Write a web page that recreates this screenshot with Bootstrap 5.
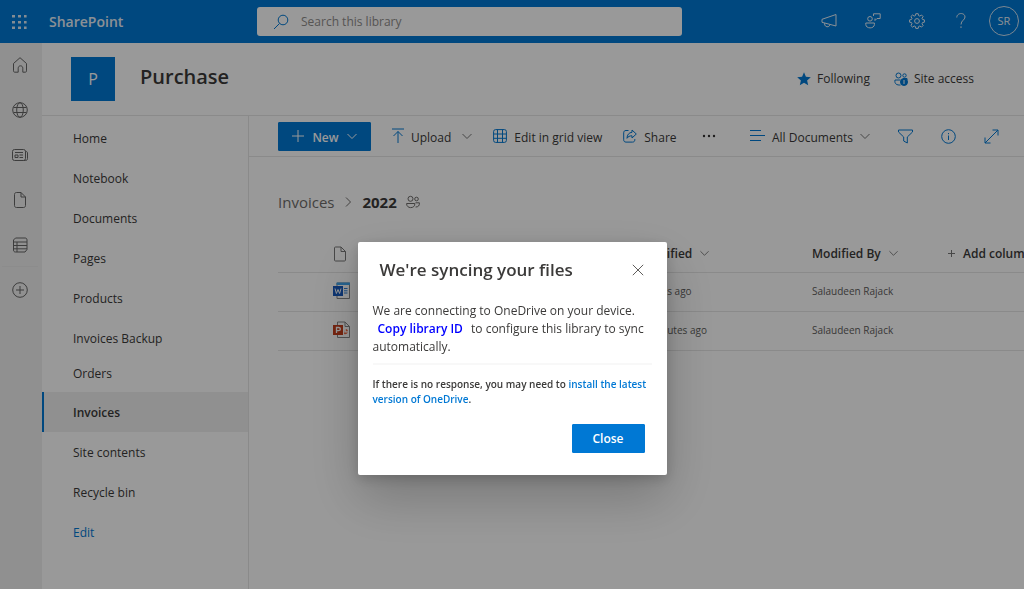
<!DOCTYPE html>
<html lang="en">
<head>
<meta charset="utf-8">
<meta name="viewport" content="width=device-width, initial-scale=1">
<title>Purchase - Invoices - 2022</title>
<link href="https://cdn.jsdelivr.net/npm/bootstrap@5.3.0/dist/css/bootstrap.min.css" rel="stylesheet">
<style>
:root{--brand:#0078d4;--ink:#3b3a39;--line:#e6e6e6}
body{font-family:"Open Sans","Noto Sans",sans-serif;font-size:12px;line-height:18px;color:var(--ink)}
svg{display:block;flex:none;fill:none;stroke:currentColor;stroke-width:1}
a{text-decoration:none;color:inherit}
.suite{background:var(--brand);height:43px;color:#fff}
.suite .brand-zone{width:257px;flex:none;padding-left:11px;gap:22px}
.suite-name{font-size:14px;font-weight:600;color:#e8f1f9}
.suite button,.cmd,.rail-link{background:none;border:0;padding:0;color:inherit}
.finder{max-width:425px;height:29px;border-radius:3px;padding:0 16px;gap:12px;color:var(--brand)}
.finder input{font-size:12px;padding:0;border:0;background:none;box-shadow:none;color:#605e5c}
.finder input::placeholder{color:#8f8d8b}
.suite-tools{gap:20px;padding:0 5px 2px 0;color:#e8f1f9}
.tool-set{gap:28px}
.avatar{width:30px;height:30px;border:1px solid #cfe2f2!important;font-size:11px}
.rail{width:42px;background:#f0f0f0;color:#666;padding:13px 2px 0 0;gap:27px}
.rail-link{height:18px}
.rail-rule{width:36px;height:1px;background:#eaeaea;margin:-15px 0 -13px}
.site-head{height:73px;border-bottom:1px solid var(--line);padding:0 50px 0 29px}
.site-logo{width:44px;height:44px;background:var(--brand);color:#fff;font-size:16px;margin-right:25px}
.site-title{font-size:20px;line-height:28px;font-weight:600;padding-bottom:4px}
.site-head .cmd{gap:6px}
.side{width:207px;flex:none;border-right:1px solid var(--line);padding-top:2px}
.side .nav-link{height:40px;padding:12px 0 0 31px;color:var(--ink)}
.side .nav-link.short{height:30px;padding-top:7px;margin-bottom:4px}
.side .nav-link.active{background:#f0f0f0;border-left:2px solid var(--brand);padding-left:29px;font-weight:600}
.side .nav-link.edit{color:var(--brand)}
.bar{height:41px;border-bottom:1px solid var(--line);padding:0 25px 0 29px}
.bar svg{color:var(--brand)}
.bar .cmd span,.bar .new-btn span{padding-top:3px}
.bar .chev,.chev{color:#777}
.cmd{display:flex;align-items:center;gap:7px;white-space:nowrap}
.btn-brand{--bs-btn-color:#fff;--bs-btn-bg:var(--brand);--bs-btn-border-color:var(--brand);--bs-btn-hover-bg:#106ebe;--bs-btn-hover-color:#fff;border-radius:1px;font-size:12px;font-weight:600;line-height:18px;height:29px;padding:0}
.new-btn{width:93px}
.bar .new-btn svg{color:#fff}
.crumbs{font-size:15px;line-height:22px;padding:34px 0 0 29px;gap:9px}
.crumbs a,.crumbs svg{color:#6f6d6b}
.list-zone{margin:22px 0 0 29px;overflow:hidden}
.files{width:768px;table-layout:fixed;margin:0;--bs-table-bg:transparent}
.files th,.files td{background:none;box-shadow:none;vertical-align:middle;border-bottom:1px solid var(--line);white-space:nowrap}
.files th{height:37px;padding:1px 0 0;font-size:12px;font-weight:600;color:var(--ink)}
.files td{height:39px;padding:0 0 2px;font-size:10px;color:#605e5c}
.files th svg{color:#777}
.modal-backdrop{--bs-backdrop-opacity:.4}
.sync .modal-dialog{max-width:309px;margin:0 auto;min-height:100%;padding-top:128px}
.sync .modal-content{border:0;border-radius:2px;color:var(--ink);box-shadow:0 23px 52px rgba(0,0,0,.22),0 4px 13px rgba(0,0,0,.18);padding:13px 15px 22px}
.sync .modal-header{border:0;padding:0 8px 0 7px}
.sync .modal-title{font-size:17px;line-height:30px;font-weight:600}
.sync .x-btn{background:none;border:0;padding:0;color:#605e5c}
.sync .modal-body{padding:17px 0 0}
.copy-link{color:#00f;font-weight:600;margin:0 5px}
.sync hr{margin:7px 0 12px;border-top:2px solid #f8f8f8;opacity:1}
.hint{font-size:10px;line-height:15px;font-weight:600}
.hint a{color:var(--brand)}
.sync .modal-footer{border:0;padding:17px 7px 0}
.close-btn{width:73px;margin:0}
</style>
</head>
<body>
<div class="d-flex flex-column min-vh-100 overflow-hidden">
  <header class="suite d-flex align-items-center">
    <div class="brand-zone d-flex align-items-center">
      <button type="button" aria-label="App launcher"><svg width="16" height="16" viewBox="0 0 16 16" style="stroke:none;fill:#dbe9f5"><path d="M1 1h3v2.600H1zM7 1h3v2.600H7zM13 1h2.600v2.600H13zM1 7h3v2.600H1zM7 7h3v2.600H7zM13 7h2.600v2.600H13zM1 12.500h3v2.600H1zM7 12.500h3v2.600H7zM13 12.500h2.600v2.600H13z"/></svg></button>
      <a href="#" class="suite-name">SharePoint</a>
    </div>
    <form class="finder d-flex align-items-center flex-grow-1 bg-white" role="search">
      <svg width="16" height="16" viewBox="0 0 16 16" stroke-width="1.200"><circle cx="10" cy="6" r="4.800"/><path d="M6.500 9.500 1 15"/></svg>
      <input class="form-control" type="search" placeholder="Search this library" aria-label="Search this library">
    </form>
    <div class="suite-tools d-flex align-items-center ms-auto">
      <div class="tool-set d-flex align-items-center">
        <button type="button" aria-label="Announcements"><svg width="16" height="16" viewBox="0 0 16 16" stroke-width="1.200" stroke-linejoin="round"><path d="M15 1.500v11.500L1 9.300V6.300zM3.500 10.200c-.2 4.400 5 4.700 5.500 1.300"/></svg></button>
        <button type="button" aria-label="Feedback"><svg width="16" height="16" viewBox="0 0 16 16" stroke-width="1.200" stroke-linejoin="round"><circle cx="5" cy="5.800" r="2.300"/><path d="M.8 10h8.600v1.500c0 4.500-8.600 4.500-8.600 0zM8.500 3V.8h6.700v4.700H12l-2 2v-2"/></svg></button>
        <button type="button" aria-label="Settings"><svg width="16" height="16" viewBox="0 0 16 16" stroke-width="1.200" stroke-linejoin="round"><path d="M6.800.7h2.400l.4 1.900 1.200.5 1.700-1.100 1.600 1.600-1.100 1.700.5 1.100 1.900.5v2.300l-1.900.4-.5 1.200 1.100 1.700-1.600 1.600-1.700-1.100-1.200.5-.4 1.900H6.800l-.4-1.900-1.200-.5-1.700 1.100-1.600-1.600L3 10.800l-.5-1.200-1.900-.4V6.900l1.900-.5L3 5.300 1.900 3.600 3.500 2l1.700 1.100 1.200-.5z"/><circle cx="8" cy="8" r="2.400"/></svg></button>
        <button type="button" aria-label="Help"><svg width="16" height="16" viewBox="0 0 16 16" stroke-width="1.300"><path d="M3.800 4.500c0-5.200 8.200-5.200 8.200-.5 0 3-4 3.500-4 7.500M8 13.300V15"/></svg></button>
      </div>
      <button type="button" class="avatar rounded-circle">SR</button>
    </div>
  </header>

  <div class="d-flex flex-grow-1">
    <nav class="rail d-flex flex-column align-items-center flex-shrink-0" aria-label="App bar">
      <a href="#" class="rail-link" aria-label="Home"><svg width="18" height="18" viewBox="0 0 18 18" stroke-width="1.200" stroke-linejoin="round"><path d="M2.500 7.500 9 1.700l6.500 5.800v7.300c0 1-.4 1.400-1.400 1.400h-2.300v-4c0-3.200-4.600-3.200-4.600 0v4H4c-1 0-1.500-.4-1.500-1.400z"/></svg></a>
      <a href="#" class="rail-link" aria-label="Sites"><svg width="18" height="18" viewBox="0 0 18 18" stroke-width="1.300"><circle cx="9" cy="9" r="7.300"/><ellipse cx="9" cy="9" rx="3.300" ry="7.300"/><path d="M2.500 6.500h13M2.500 11.500h13"/></svg></a>
      <a href="#" class="rail-link" aria-label="News"><svg width="18" height="18" viewBox="0 0 18 18" stroke-width="1.200"><rect x="1.500" y="3.500" width="13" height="11" rx="2"/><path d="M14.500 5.500c1.500 0 2 .5 2 1.500v5.500c0 1.300-.7 2-2 2h-2M4 6.500h8M8.500 9H12M8.500 11.500H12M4 9h3v2.500H4z"/></svg></a>
      <a href="#" class="rail-link" aria-label="Files"><svg width="18" height="18" viewBox="0 0 18 18" stroke-width="1.200" stroke-linejoin="round"><path d="M10 1.500H5.500c-1.200 0-2 .7-2 2v11c0 1.300.8 2 2 2h7c1.200 0 2-.7 2-2V6zV6h4.500"/></svg></a>
      <a href="#" class="rail-link" aria-label="Lists"><svg width="18" height="18" viewBox="0 0 18 18" stroke-width="1.200"><path d="m2.500 4 2-2H14c1.300 0 2 .7 2 2v9.500L14 16H4.500c-1.300 0-2-.7-2-2zM2.500 6H16M2.500 9.500H16M2.500 12.800H16M6 6v10"/></svg></a>
      <div class="rail-rule"></div>
      <a href="#" class="rail-link" aria-label="Create"><svg width="18" height="18" viewBox="0 0 18 18" stroke-width="1.200"><circle cx="9" cy="9" r="7.300"/><path d="M9 5v8M5 9h8"/></svg></a>
    </nav>

    <div class="d-flex flex-column flex-grow-1" style="min-width:0">
      <div class="site-head d-flex align-items-center">
        <div class="site-logo d-flex align-items-center justify-content-center">P</div>
        <h1 class="site-title m-0">Purchase</h1>
        <div class="d-flex ms-auto gap-4">
          <button type="button" class="cmd"><svg width="14" height="14" viewBox="0 0 14 14" style="color:#0078d4;fill:currentColor;stroke:none"><path d="m7 .3 1.900 4.500 4.900.4-3.700 3.200 1.100 4.900L7 10.700l-4.200 2.600 1.100-4.900L.2 5.200l4.900-.4z"/></svg>Following</button>
          <button type="button" class="cmd"><svg width="14" height="14" viewBox="0 0 14 14" style="color:#0078d4"><circle cx="4.500" cy="3.500" r="2.500"/><circle cx="10.500" cy="3.500" r="1.700"/><path d="M6.500 8H1c-.8 4 2 5.300 5.500 5M9 6.500h4v1.500"/><circle cx="10" cy="10" r="3.500" fill="currentColor"/><path d="M10 8v4" stroke="#fff"/></svg>Site access</button>
        </div>
      </div>

      <div class="d-flex flex-grow-1">
        <nav class="side nav flex-column flex-nowrap" aria-label="Site">
          <a class="nav-link" href="#">Home</a>
          <a class="nav-link" href="#">Notebook</a>
          <a class="nav-link" href="#">Documents</a>
          <a class="nav-link" href="#">Pages</a>
          <a class="nav-link" href="#">Products</a>
          <a class="nav-link" href="#">Invoices Backup</a>
          <a class="nav-link short" href="#">Orders</a>
          <a class="nav-link active" aria-current="page" href="#">Invoices</a>
          <a class="nav-link" href="#">Site contents</a>
          <a class="nav-link" href="#">Recycle bin</a>
          <a class="nav-link edit" href="#">Edit</a>
        </nav>

        <main class="flex-grow-1" style="min-width:0">
          <div class="bar d-flex align-items-center justify-content-between">
            <div class="d-flex align-items-center" style="gap:21px">
              <button type="button" class="btn btn-brand new-btn d-flex align-items-center justify-content-center gap-2"><svg width="12" height="12" viewBox="0 0 12 12"><path d="M6 0v12M0 6h12"/></svg><span>New</span><svg width="10" height="10" viewBox="0 0 10 10" stroke-width="1.500"><path d="m.5 3 4.500 4.500L9.500 3"/></svg></button>
              <button type="button" class="cmd"><svg width="12" height="16" viewBox="1 0 12 16"><path d="M1 1h12M7 15V3.500M2.500 8 7 3.500 11.500 8"/></svg><span>Upload</span><svg class="chev ms-1" width="10" height="10" viewBox="0 0 10 10"><path d="m.5 3 4.500 4.500L9.500 3"/></svg></button>
              <button type="button" class="cmd"><svg width="14" height="14" viewBox="0 0 14 14"><rect x=".6" y=".6" width="12.800" height="12.800" rx="2"/><path d="M4.500.6v12.800M9.500.6v12.800M.6 5h12.800M.6 9.300h12.800"/></svg><span>Edit in grid view</span></button>
              <button type="button" class="cmd"><svg width="14" height="14" viewBox="0 0 14 14" stroke-linejoin="round"><path d="M5.500 1.500H3c-1.500 0-2.300.8-2.300 2.300v7c0 1.500.8 2.300 2.300 2.300h6.500c1.500 0 2.300-.8 2.300-2.300V10M9 1l4.300 4L9 9V6.800c-2.500 0-3.800.7-5 2.500 0-3.500 2-5.800 5-6z"/></svg><span>Share</span></button>
              <button type="button" class="cmd ms-1" aria-label="More"><svg width="14" height="4" viewBox="0 0 14 4" style="color:#323130;fill:currentColor;stroke:none"><circle cx="2" cy="2" r="1.200"/><circle cx="7" cy="2" r="1.200"/><circle cx="12" cy="2" r="1.200"/></svg></button>
            </div>
            <div class="d-flex align-items-center" style="gap:28px">
              <button type="button" class="cmd"><svg width="15" height="14" viewBox="0 0 15 14"><path d="M0 1.500h11M0 6.500h15M0 11.500h11"/></svg><span>All Documents</span><svg class="chev" width="10" height="10" viewBox="0 0 10 10"><path d="m.5 3 4.500 4.500L9.500 3"/></svg></button>
              <button type="button" class="cmd" aria-label="Filter"><svg width="15" height="15" viewBox="0 0 15 15"><path d="M.5 1h14v2L9.300 8v6l-3.600-2V8L.5 3z"/></svg></button>
              <button type="button" class="cmd" aria-label="Details"><svg width="15" height="15" viewBox="0 0 15 15"><circle cx="7.500" cy="7.500" r="6.800"/><path d="M7.500 6.500V11M7.500 4v1.200"/></svg></button>
              <button type="button" class="cmd" aria-label="Expand"><svg width="15" height="15" viewBox="0 0 15 15"><path d="M1 14 14 1M8.500 1H14v5.500M1 8.500V14h5.500"/></svg></button>
            </div>
          </div>

          <nav class="crumbs d-flex align-items-center" aria-label="Breadcrumb">
            <a href="#">Invoices</a>
            <svg width="10" height="10" viewBox="0 0 10 10"><path d="m3 .5 4.500 4.500L3 9.500"/></svg>
            <strong class="fw-bold">2022</strong>
            <svg width="14" height="14" viewBox="0 0 14 14"><circle cx="4.500" cy="3.800" r="2.500"/><circle cx="10.500" cy="4" r="1.800"/><path d="M.6 8.500h8.200c.7 5.500-8.600 5.500-8.200 0zM9.500 7.800h3.900c.2 3-1.200 4.200-3.800 4.200"/></svg>
          </nav>

          <div class="list-zone">
            <table class="table files">
              <colgroup><col style="width:55px"><col style="width:308px"><col style="width:171px"><col style="width:136px"><col></colgroup>
              <thead>
                <tr>
                  <th scope="col"></th>
                  <th scope="col" aria-label="File type and name"><svg width="14" height="16" viewBox="0 0 14 16"><path d="M8 1H2.500C1.800 1 1.500 1.400 1.500 2v12c0 .6.3 1 1 1h9c.6 0 1-.4 1-1V5.500zV5.500h4.500"/></svg></th>
                  <th scope="col"><span class="d-flex align-items-center gap-2">Modified<svg class="chev" width="9" height="9" viewBox="0 0 10 10"><path d="m.5 2.500 4.500 4.500 4.500-4.500"/></svg></span></th>
                  <th scope="col"><span class="d-flex align-items-center gap-2">Modified By<svg class="chev" width="9" height="9" viewBox="0 0 10 10"><path d="m.5 2.500 4.500 4.500 4.500-4.500"/></svg></span></th>
                  <th scope="col"><span class="d-flex align-items-center gap-2"><svg class="chev" width="7" height="7" viewBox="0 0 7 7"><path d="M3.500 0v7M0 3.500h7"/></svg>Add column</span></th>
                </tr>
              </thead>
              <tbody>
                <tr>
                  <td></td>
                  <td><svg width="18" height="18" viewBox="0 0 18 18"><path d="M4 1h12.500v15.500H4z" fill="#fff" stroke="#888"/><path d="M3.500.5H17V3H3.500z" fill="#41a5ee" stroke="none"/><path d="M11 6.500h3.500M11 8.800h3.500M11 11h3.500" stroke="#2b7cd3"/><rect y="4" width="10" height="10" fill="#185abd" stroke="none"/><path d="m2 6.500 1.400 5L5 7.500l1.600 4 1.400-5" stroke="#fff"/></svg></td>
                  <td>2 mins ago</td><td>Salaudeen Rajack</td><td></td>
                </tr>
                <tr>
                  <td></td>
                  <td><svg width="18" height="18" viewBox="0 0 18 18"><path d="M4.500 1H12l4.500 4.500v11h-12zM12 1v4.500h4.500" fill="#fff" stroke="#888"/><path d="M11.500 8v3.500H15A3.500 3.500 0 0 1 11 13zM12.800 8c1.500.2 2 1 2.200 2.200h-2.200z" fill="#ed6c47" stroke="none"/><rect y="4" width="10" height="10" fill="#c43e1c" stroke="none"/><path d="M3.500 12V6.500h2c2.500 0 2.500 3.200 0 3.200h-2" stroke="#fff" stroke-width="1.300"/></svg></td>
                  <td>3 minutes ago</td><td>Salaudeen Rajack</td><td></td>
                </tr>
              </tbody>
            </table>
          </div>
        </main>
      </div>
    </div>
  </div>
</div>

<div class="modal-backdrop show"></div>
<div class="modal sync d-block" tabindex="-1" role="dialog" aria-modal="true" aria-labelledby="syncTitle">
  <div class="modal-dialog modal-dialog-centered">
    <div class="modal-content">
      <div class="modal-header">
        <h2 class="modal-title" id="syncTitle">We're syncing your files</h2>
        <button type="button" class="x-btn" aria-label="Close dialog"><svg width="12" height="12" viewBox="0 0 12 12" stroke-width="1.200"><path d="m.8.800 10.400 10.400M11.200.800.800 11.200"/></svg></button>
      </div>
      <div class="modal-body">
        <p class="m-0">We are connecting to OneDrive on your device.<br><a href="#" class="copy-link">Copy library ID</a> to configure this library to sync automatically.</p>
        <hr>
        <p class="hint m-0">If there is no response, you may need to <a href="#">install the latest version of OneDrive</a>.</p>
      </div>
      <div class="modal-footer">
        <button type="button" class="btn btn-brand close-btn">Close</button>
      </div>
    </div>
  </div>
</div>
<script src="https://cdn.jsdelivr.net/npm/bootstrap@5.3.0/dist/js/bootstrap.bundle.min.js"></script>
</body>
</html>
